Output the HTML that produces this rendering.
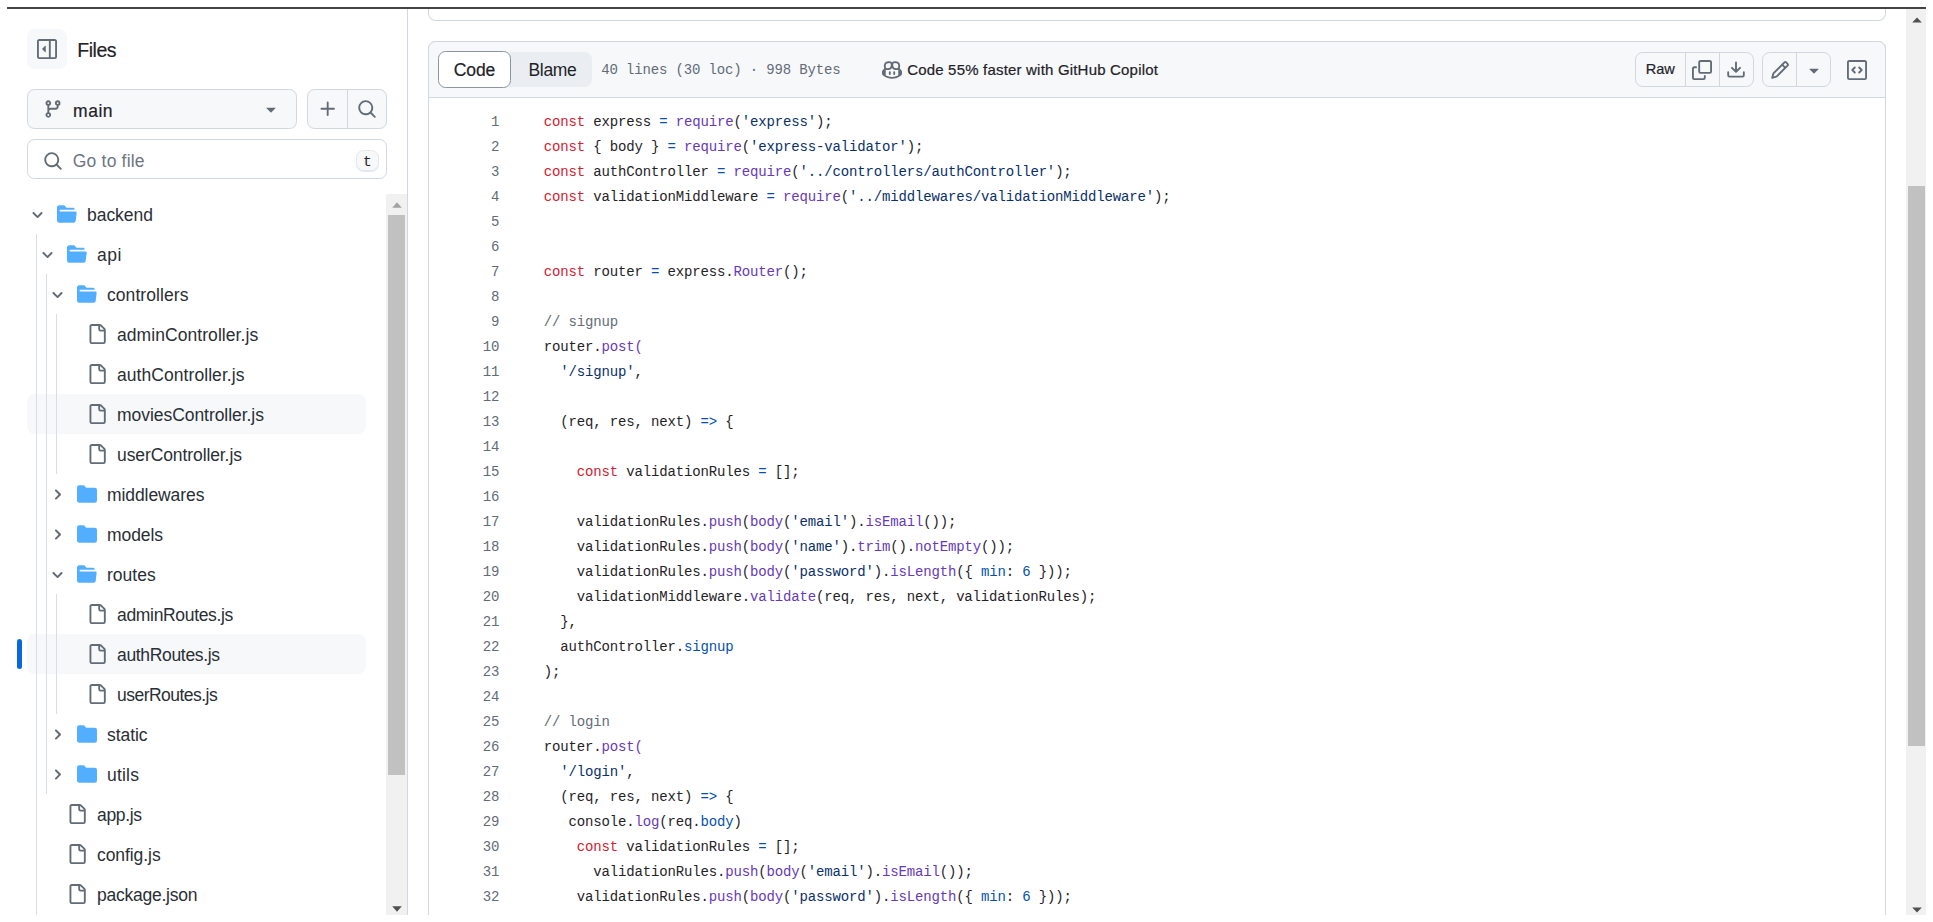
<!DOCTYPE html>
<html lang="en">
<head>
<meta charset="utf-8">
<title>authRoutes.js</title>
<style>
html,body{margin:0;padding:0;background:#fff;}
body{width:1933px;height:922px;position:relative;overflow:hidden;font-family:"Liberation Sans",sans-serif;color:#1f2328;}
.abs,.ic,.t{position:absolute;}
.ic{display:block;overflow:visible;}
.t{white-space:pre;line-height:1;}
.box{position:absolute;box-sizing:border-box;}
.tree{font-size:17.5px;color:#2a2f35;}
.sb{-webkit-text-stroke:0.2px #1f2328;}
.mono{font-family:"Liberation Mono",monospace;}
.ln{position:absolute;left:440px;width:59.3px;text-align:right;color:#636c76;}
.cl{position:absolute;left:543.75px;}
.code{font-family:"Liberation Mono",monospace;font-size:14px;letter-spacing:-0.154px;line-height:25px;white-space:pre;color:#1f2328;}
.k{color:#cf222e}.f{color:#6639ba}.c{color:#0550ae}.s{color:#0a3069}.m{color:#656d76}
</style>
</head>
<body>

<div class="box" style="left:7px;top:7px;width:1919px;height:2px;background:#444444"></div>
<div class="box" style="left:1906px;top:9px;width:20px;height:906px;background:#f1f1f1"></div>
<div class="box" style="left:1908px;top:186px;width:17px;height:560px;background:#c1c1c1"></div>
<svg class="ic" style="left:1911.5px;top:17.4px;width:10px;height:6px" viewBox="0 0 10 6"><path d="M5 0.5 9.8 5.5H0.2Z" fill="#505050"/></svg>
<svg class="ic" style="left:1911.5px;top:906.5px;width:10px;height:6px" viewBox="0 0 10 6"><path d="M5 5.5 9.8 0.5H0.2Z" fill="#505050"/></svg>
<div class="box" style="left:407px;top:9px;width:1px;height:906px;background:#d0d7de"></div>
<div class="box" style="left:27px;top:29px;width:40px;height:40px;background:#f6f8fa;border-radius:7.5px"></div>
<svg class="ic" style="left:37px;top:39px;width:20px;height:20px;fill:#636c76" viewBox="0 0 16 16"><path d="m4.177 7.823 2.396-2.396A.25.25 0 0 1 7 5.604v4.792a.25.25 0 0 1-.427.177L4.177 8.177a.25.25 0 0 1 0-.354Z"/><path d="M0 1.75C0 .784.784 0 1.750 0h12.500C15.216 0 16 .784 16 1.750v12.500A1.750 1.750 0 0 1 14.250 16H1.750A1.750 1.750 0 0 1 0 14.250Zm1.750-.250a.250.250 0 0 0-.250.250v12.500c0 .138.112.250.250.250H9.500v-13Zm12.500 13a.250.250 0 0 0 .250-.250V1.750a.250.250 0 0 0-.250-.250H11v13Z"/></svg>
<div class="t sb" id="files" style="left:77px;top:41.0px;font-size:19.5px;letter-spacing:-0.441px;margin-left:0.21px;">Files</div>
<div class="box" style="left:27px;top:89px;width:270px;height:40px;background:#f6f8fa;border:1px solid #d0d7de;border-radius:7.5px"></div>
<svg class="ic" style="left:43px;top:99px;width:20px;height:20px;fill:#636c76" viewBox="0 0 16 16"><path d="M9.500 3.250a2.250 2.250 0 1 1 3 2.122V6A2.500 2.500 0 0 1 10 8.500H6a1 1 0 0 0-1 1v1.128a2.251 2.251 0 1 1-1.500 0V5.372a2.250 2.250 0 1 1 1.500 0v1.836A2.493 2.493 0 0 1 6 7h4a1 1 0 0 0 1-1v-.628A2.250 2.250 0 0 1 9.500 3.250Zm-6 0a.750.750 0 1 0 1.500 0 .750.750 0 0 0-1.500 0Zm8.250-.750a.750.750 0 1 0 0 1.500.750.750 0 0 0 0-1.500ZM4.250 12a.750.750 0 1 0 0 1.500.750.750 0 0 0 0-1.500Z"/></svg>
<div class="t sb" id="main" style="left:73px;top:102.6px;font-size:17.5px;letter-spacing:0.504px;margin-left:0.08px;">main</div>
<svg class="ic" style="left:261px;top:99px;width:20px;height:20px;fill:#636c76" viewBox="0 0 16 16"><path d="m4.427 7.427 3.396 3.396a.250.250 0 0 0 .354 0l3.396-3.396A.250.250 0 0 0 11.396 7H4.604a.250.250 0 0 0-.177.427Z"/></svg>
<div class="box" style="left:307px;top:89px;width:80px;height:40px;background:#f6f8fa;border:1px solid #d0d7de;border-radius:7.5px"></div>
<div class="box" style="left:347px;top:90px;width:1px;height:38px;background:#d0d7de"></div>
<svg class="ic" style="left:318px;top:99px;width:20px;height:20px;fill:#636c76" viewBox="0 0 16 16"><path d="M7.750 2a.750.750 0 0 1 .750.750V7h4.250a.750.750 0 0 1 0 1.500H8.500v4.250a.750.750 0 0 1-1.500 0V8.500H2.750a.750.750 0 0 1 0-1.500H7V2.750A.750.750 0 0 1 7.750 2Z"/></svg>
<svg class="ic" style="left:357px;top:99px;width:20px;height:20px;fill:#636c76" viewBox="0 0 16 16"><path d="M10.680 11.740a6 6 0 0 1-7.922-8.982 6 6 0 0 1 8.982 7.922l3.040 3.040a.749.749 0 0 1-.326 1.275.749.749 0 0 1-.734-.215ZM11.500 7a4.499 4.499 0 1 0-8.997 0A4.499 4.499 0 0 0 11.500 7Z"/></svg>
<div class="box" style="left:27px;top:139px;width:360px;height:40px;background:#fff;border:1px solid #d0d7de;border-radius:7.5px"></div>
<svg class="ic" style="left:43px;top:151px;width:20px;height:20px;fill:#636c76" viewBox="0 0 16 16"><path d="M10.680 11.740a6 6 0 0 1-7.922-8.982 6 6 0 0 1 8.982 7.922l3.040 3.040a.749.749 0 0 1-.326 1.275.749.749 0 0 1-.734-.215ZM11.500 7a4.499 4.499 0 1 0-8.997 0A4.499 4.499 0 0 0 11.500 7Z"/></svg>
<div class="t" id="gotofile" style="left:73px;top:152.8px;font-size:17.5px;color:#6e7781;letter-spacing:0.183px;margin-left:-0.18px;">Go to file</div>
<div class="box" style="left:356px;top:150px;width:23px;height:22px;background:#f6f8fa;border:1px solid #e4e8ec;border-radius:7.5px;box-shadow:inset 0 -1px 0 #e4e8ec"></div>
<div class="t mono" style="left:363px;top:154.5px;font-size:14.5px;color:#1f2328">t</div>
<div class="box" style="left:386px;top:194px;width:21px;height:721px;background:#f1f1f1"></div>
<div class="box" style="left:388px;top:215px;width:17px;height:560px;background:#c1c1c1"></div>
<svg class="ic" style="left:391.6px;top:202.4px;width:10px;height:6px" viewBox="0 0 10 6"><path d="M5 0.3 9.8 5.8H0.2Z" fill="#a3a3a3"/></svg>
<svg class="ic" style="left:392px;top:906.4px;width:10px;height:6px" viewBox="0 0 10 6"><path d="M5 5.7 9.8 0.2H0.2Z" fill="#505050"/></svg>
<div class="tree">
<svg class="ic" style="left:30px;top:207px;width:15px;height:15px;fill:#636c76" viewBox="0 0 12 12"><path d="M6 8.825c-.2 0-.4-.1-.5-.2l-3.300-3.300c-.3-.3-.3-.8 0-1.100.3-.3.8-.3 1.100 0l2.700 2.700 2.700-2.700c.3-.3.8-.3 1.100 0 .3.3.3.8 0 1.100l-3.200 3.200c-.2.2-.4.3-.6.3Z"/></svg>
<svg class="ic" style="left:57px;top:204px;width:20px;height:20px;fill:#54aeff" viewBox="0 0 16 16"><path d="M.513 1.513A1.750 1.750 0 0 1 1.750 1h3.500c.550 0 1.070.260 1.400.700l.900 1.200a.250.250 0 0 0 .200.100H13a1 1 0 0 1 1 1v.500H2.750a.750.750 0 0 0 0 1.500h11.978a1 1 0 0 1 .994 1.117L15 13.250A1.750 1.750 0 0 1 13.250 15H1.750A1.750 1.750 0 0 1 0 13.250V2.750c0-.464.184-.910.513-1.237Z"/></svg>
<div class="t" id="r0" style="left:87px;top:206.8px;letter-spacing:-0.042px;margin-left:0.00px;">backend</div>
<svg class="ic" style="left:40px;top:247px;width:15px;height:15px;fill:#636c76" viewBox="0 0 12 12"><path d="M6 8.825c-.2 0-.4-.1-.5-.2l-3.300-3.300c-.3-.3-.3-.8 0-1.100.3-.3.8-.3 1.100 0l2.700 2.700 2.700-2.700c.3-.3.8-.3 1.100 0 .3.3.3.8 0 1.100l-3.200 3.200c-.2.2-.4.3-.6.3Z"/></svg>
<svg class="ic" style="left:67px;top:244px;width:20px;height:20px;fill:#54aeff" viewBox="0 0 16 16"><path d="M.513 1.513A1.750 1.750 0 0 1 1.750 1h3.500c.550 0 1.070.260 1.400.700l.900 1.200a.250.250 0 0 0 .200.100H13a1 1 0 0 1 1 1v.500H2.750a.750.750 0 0 0 0 1.500h11.978a1 1 0 0 1 .994 1.117L15 13.250A1.750 1.750 0 0 1 13.250 15H1.750A1.750 1.750 0 0 1 0 13.250V2.750c0-.464.184-.910.513-1.237Z"/></svg>
<div class="t" id="r1" style="left:97px;top:246.8px;letter-spacing:0.540px;margin-left:0.00px;">api</div>
<svg class="ic" style="left:50px;top:287px;width:15px;height:15px;fill:#636c76" viewBox="0 0 12 12"><path d="M6 8.825c-.2 0-.4-.1-.5-.2l-3.300-3.300c-.3-.3-.3-.8 0-1.100.3-.3.8-.3 1.100 0l2.700 2.700 2.700-2.700c.3-.3.8-.3 1.100 0 .3.3.3.8 0 1.100l-3.200 3.200c-.2.2-.4.3-.6.3Z"/></svg>
<svg class="ic" style="left:77px;top:284px;width:20px;height:20px;fill:#54aeff" viewBox="0 0 16 16"><path d="M.513 1.513A1.750 1.750 0 0 1 1.750 1h3.500c.550 0 1.070.260 1.400.700l.900 1.200a.250.250 0 0 0 .200.100H13a1 1 0 0 1 1 1v.500H2.750a.750.750 0 0 0 0 1.500h11.978a1 1 0 0 1 .994 1.117L15 13.250A1.750 1.750 0 0 1 13.250 15H1.750A1.750 1.750 0 0 1 0 13.250V2.750c0-.464.184-.910.513-1.237Z"/></svg>
<div class="t" id="r2" style="left:107px;top:286.8px;letter-spacing:0.071px;margin-left:0.00px;">controllers</div>
<svg class="ic" style="left:87px;top:324px;width:20px;height:20px;fill:#636c76" viewBox="0 0 16 16"><path d="M2 1.750C2 .784 2.784 0 3.750 0h6.586c.464 0 .909.184 1.237.513l2.914 2.914c.329.328.513.773.513 1.237v9.586A1.750 1.750 0 0 1 13.250 16h-9.500A1.750 1.750 0 0 1 2 14.250Zm1.750-.250a.250.250 0 0 0-.250.250v12.500c0 .138.112.250.250.250h9.500a.250.250 0 0 0 .250-.250V6h-2.750A1.750 1.750 0 0 1 9 4.250V1.500Zm6.750.062V4.250c0 .138.112.250.250.250h2.688l-.011-.013-2.914-2.914-.013-.011Z"/></svg>
<div class="t" id="r3" style="left:117px;top:326.8px;letter-spacing:0.064px;margin-left:0.00px;">adminController.js</div>
<svg class="ic" style="left:87px;top:364px;width:20px;height:20px;fill:#636c76" viewBox="0 0 16 16"><path d="M2 1.750C2 .784 2.784 0 3.750 0h6.586c.464 0 .909.184 1.237.513l2.914 2.914c.329.328.513.773.513 1.237v9.586A1.750 1.750 0 0 1 13.250 16h-9.500A1.750 1.750 0 0 1 2 14.250Zm1.750-.250a.250.250 0 0 0-.250.250v12.500c0 .138.112.250.250.250h9.500a.250.250 0 0 0 .250-.250V6h-2.750A1.750 1.750 0 0 1 9 4.250V1.500Zm6.750.062V4.250c0 .138.112.250.250.250h2.688l-.011-.013-2.914-2.914-.013-.011Z"/></svg>
<div class="t" id="r4" style="left:117px;top:366.8px;letter-spacing:0.062px;margin-left:0.00px;">authController.js</div>
<div class="box" style="left:27px;top:394px;width:339px;height:40px;background:#f6f8fa;border-radius:7.5px"></div>
<svg class="ic" style="left:87px;top:404px;width:20px;height:20px;fill:#636c76" viewBox="0 0 16 16"><path d="M2 1.750C2 .784 2.784 0 3.750 0h6.586c.464 0 .909.184 1.237.513l2.914 2.914c.329.328.513.773.513 1.237v9.586A1.750 1.750 0 0 1 13.250 16h-9.500A1.750 1.750 0 0 1 2 14.250Zm1.750-.250a.250.250 0 0 0-.250.250v12.500c0 .138.112.250.250.250h9.500a.250.250 0 0 0 .250-.250V6h-2.750A1.750 1.750 0 0 1 9 4.250V1.500Zm6.750.062V4.250c0 .138.112.250.250.250h2.688l-.011-.013-2.914-2.914-.013-.011Z"/></svg>
<div class="t" id="r5" style="left:117px;top:406.8px;letter-spacing:-0.050px;margin-left:0.00px;">moviesController.js</div>
<svg class="ic" style="left:87px;top:444px;width:20px;height:20px;fill:#636c76" viewBox="0 0 16 16"><path d="M2 1.750C2 .784 2.784 0 3.750 0h6.586c.464 0 .909.184 1.237.513l2.914 2.914c.329.328.513.773.513 1.237v9.586A1.750 1.750 0 0 1 13.250 16h-9.500A1.750 1.750 0 0 1 2 14.250Zm1.750-.250a.250.250 0 0 0-.250.250v12.500c0 .138.112.250.250.250h9.500a.250.250 0 0 0 .250-.250V6h-2.750A1.750 1.750 0 0 1 9 4.250V1.500Zm6.750.062V4.250c0 .138.112.250.250.250h2.688l-.011-.013-2.914-2.914-.013-.011Z"/></svg>
<div class="t" id="r6" style="left:117px;top:446.8px;letter-spacing:-0.094px;margin-left:0.00px;">userController.js</div>
<svg class="ic" style="left:50px;top:487px;width:15px;height:15px;fill:#636c76" viewBox="0 0 12 12"><path d="M4.700 10c-.2 0-.4-.1-.5-.2-.3-.3-.3-.8 0-1.100L6.900 6 4.200 3.300c-.3-.3-.3-.8 0-1.100.3-.3.8-.3 1.100 0l3.300 3.200c.3.3.3.8 0 1.100l-3.300 3.300c-.2.1-.4.2-.6.2Z"/></svg>
<svg class="ic" style="left:77px;top:484px;width:20px;height:20px;fill:#54aeff" viewBox="0 0 16 16"><path d="M1.750 1A1.750 1.750 0 0 0 0 2.750v10.500C0 14.216.784 15 1.750 15h12.500A1.750 1.750 0 0 0 16 13.250v-8.500A1.750 1.750 0 0 0 14.250 3H7.500a.250.250 0 0 1-.200-.100l-.900-1.200C6.070 1.260 5.550 1 5 1H1.750Z"/></svg>
<div class="t" id="r7" style="left:107px;top:486.8px;letter-spacing:-0.081px;margin-left:0.00px;">middlewares</div>
<svg class="ic" style="left:50px;top:527px;width:15px;height:15px;fill:#636c76" viewBox="0 0 12 12"><path d="M4.700 10c-.2 0-.4-.1-.5-.2-.3-.3-.3-.8 0-1.100L6.900 6 4.200 3.300c-.3-.3-.3-.8 0-1.100.3-.3.8-.3 1.100 0l3.300 3.200c.3.3.3.8 0 1.100l-3.300 3.300c-.2.1-.4.2-.6.2Z"/></svg>
<svg class="ic" style="left:77px;top:524px;width:20px;height:20px;fill:#54aeff" viewBox="0 0 16 16"><path d="M1.750 1A1.750 1.750 0 0 0 0 2.750v10.500C0 14.216.784 15 1.750 15h12.500A1.750 1.750 0 0 0 16 13.250v-8.500A1.750 1.750 0 0 0 14.250 3H7.500a.250.250 0 0 1-.200-.100l-.900-1.200C6.070 1.260 5.550 1 5 1H1.750Z"/></svg>
<div class="t" id="r8" style="left:107px;top:526.8px;letter-spacing:-0.059px;margin-left:0.00px;">models</div>
<svg class="ic" style="left:50px;top:567px;width:15px;height:15px;fill:#636c76" viewBox="0 0 12 12"><path d="M6 8.825c-.2 0-.4-.1-.5-.2l-3.300-3.300c-.3-.3-.3-.8 0-1.100.3-.3.8-.3 1.100 0l2.700 2.700 2.700-2.700c.3-.3.8-.3 1.100 0 .3.3.3.8 0 1.100l-3.200 3.200c-.2.2-.4.3-.6.3Z"/></svg>
<svg class="ic" style="left:77px;top:564px;width:20px;height:20px;fill:#54aeff" viewBox="0 0 16 16"><path d="M.513 1.513A1.750 1.750 0 0 1 1.750 1h3.500c.550 0 1.070.260 1.400.700l.900 1.200a.250.250 0 0 0 .200.100H13a1 1 0 0 1 1 1v.500H2.750a.750.750 0 0 0 0 1.500h11.978a1 1 0 0 1 .994 1.117L15 13.250A1.750 1.750 0 0 1 13.250 15H1.750A1.750 1.750 0 0 1 0 13.250V2.750c0-.464.184-.910.513-1.237Z"/></svg>
<div class="t" id="r9" style="left:107px;top:566.8px;letter-spacing:-0.002px;margin-left:0.00px;">routes</div>
<svg class="ic" style="left:87px;top:604px;width:20px;height:20px;fill:#636c76" viewBox="0 0 16 16"><path d="M2 1.750C2 .784 2.784 0 3.750 0h6.586c.464 0 .909.184 1.237.513l2.914 2.914c.329.328.513.773.513 1.237v9.586A1.750 1.750 0 0 1 13.250 16h-9.500A1.750 1.750 0 0 1 2 14.250Zm1.750-.250a.250.250 0 0 0-.250.250v12.500c0 .138.112.250.250.250h9.500a.250.250 0 0 0 .250-.250V6h-2.750A1.750 1.750 0 0 1 9 4.250V1.500Zm6.750.062V4.250c0 .138.112.250.250.250h2.688l-.011-.013-2.914-2.914-.013-.011Z"/></svg>
<div class="t" id="r10" style="left:117px;top:606.8px;letter-spacing:-0.326px;margin-left:0.00px;">adminRoutes.js</div>
<div class="box" style="left:27px;top:634px;width:339px;height:40px;background:#f6f8fa;border-radius:7.5px"></div>
<div class="box" style="left:17px;top:639px;width:5px;height:30px;background:#0969da;border-radius:7.5px"></div>
<svg class="ic" style="left:87px;top:644px;width:20px;height:20px;fill:#636c76" viewBox="0 0 16 16"><path d="M2 1.750C2 .784 2.784 0 3.750 0h6.586c.464 0 .909.184 1.237.513l2.914 2.914c.329.328.513.773.513 1.237v9.586A1.750 1.750 0 0 1 13.250 16h-9.500A1.750 1.750 0 0 1 2 14.250Zm1.750-.250a.250.250 0 0 0-.250.250v12.500c0 .138.112.250.250.250h9.500a.250.250 0 0 0 .250-.250V6h-2.750A1.750 1.750 0 0 1 9 4.250V1.500Zm6.750.062V4.250c0 .138.112.250.250.250h2.688l-.011-.013-2.914-2.914-.013-.011Z"/></svg>
<div class="t" id="r11" style="left:117px;top:646.8px;letter-spacing:-0.329px;margin-left:0.00px;">authRoutes.js</div>
<svg class="ic" style="left:87px;top:684px;width:20px;height:20px;fill:#636c76" viewBox="0 0 16 16"><path d="M2 1.750C2 .784 2.784 0 3.750 0h6.586c.464 0 .909.184 1.237.513l2.914 2.914c.329.328.513.773.513 1.237v9.586A1.750 1.750 0 0 1 13.250 16h-9.500A1.750 1.750 0 0 1 2 14.250Zm1.750-.250a.250.250 0 0 0-.250.250v12.500c0 .138.112.250.250.250h9.500a.250.250 0 0 0 .250-.250V6h-2.750A1.750 1.750 0 0 1 9 4.250V1.500Zm6.750.062V4.250c0 .138.112.250.250.250h2.688l-.011-.013-2.914-2.914-.013-.011Z"/></svg>
<div class="t" id="r12" style="left:117px;top:686.8px;letter-spacing:-0.527px;margin-left:0.00px;">userRoutes.js</div>
<svg class="ic" style="left:50px;top:727px;width:15px;height:15px;fill:#636c76" viewBox="0 0 12 12"><path d="M4.700 10c-.2 0-.4-.1-.5-.2-.3-.3-.3-.8 0-1.100L6.900 6 4.200 3.300c-.3-.3-.3-.8 0-1.100.3-.3.8-.3 1.100 0l3.300 3.200c.3.3.3.8 0 1.100l-3.300 3.300c-.2.1-.4.2-.6.2Z"/></svg>
<svg class="ic" style="left:77px;top:724px;width:20px;height:20px;fill:#54aeff" viewBox="0 0 16 16"><path d="M1.750 1A1.750 1.750 0 0 0 0 2.750v10.500C0 14.216.784 15 1.750 15h12.500A1.750 1.750 0 0 0 16 13.250v-8.500A1.750 1.750 0 0 0 14.250 3H7.500a.250.250 0 0 1-.200-.100l-.900-1.200C6.070 1.260 5.550 1 5 1H1.750Z"/></svg>
<div class="t" id="r13" style="left:107px;top:726.8px;letter-spacing:-0.061px;margin-left:0.00px;">static</div>
<svg class="ic" style="left:50px;top:767px;width:15px;height:15px;fill:#636c76" viewBox="0 0 12 12"><path d="M4.700 10c-.2 0-.4-.1-.5-.2-.3-.3-.3-.8 0-1.100L6.900 6 4.200 3.300c-.3-.3-.3-.8 0-1.100.3-.3.8-.3 1.100 0l3.300 3.200c.3.3.3.8 0 1.100l-3.300 3.300c-.2.1-.4.2-.6.2Z"/></svg>
<svg class="ic" style="left:77px;top:764px;width:20px;height:20px;fill:#54aeff" viewBox="0 0 16 16"><path d="M1.750 1A1.750 1.750 0 0 0 0 2.750v10.500C0 14.216.784 15 1.750 15h12.500A1.750 1.750 0 0 0 16 13.250v-8.500A1.750 1.750 0 0 0 14.250 3H7.500a.250.250 0 0 1-.200-.100l-.900-1.200C6.070 1.260 5.550 1 5 1H1.750Z"/></svg>
<div class="t" id="r14" style="left:107px;top:766.8px;letter-spacing:0.207px;margin-left:0.00px;">utils</div>
<svg class="ic" style="left:67px;top:804px;width:20px;height:20px;fill:#636c76" viewBox="0 0 16 16"><path d="M2 1.750C2 .784 2.784 0 3.750 0h6.586c.464 0 .909.184 1.237.513l2.914 2.914c.329.328.513.773.513 1.237v9.586A1.750 1.750 0 0 1 13.250 16h-9.500A1.750 1.750 0 0 1 2 14.250Zm1.750-.250a.250.250 0 0 0-.250.250v12.500c0 .138.112.250.250.250h9.500a.250.250 0 0 0 .250-.250V6h-2.750A1.750 1.750 0 0 1 9 4.250V1.500Zm6.750.062V4.250c0 .138.112.250.250.250h2.688l-.011-.013-2.914-2.914-.013-.011Z"/></svg>
<div class="t" id="r15" style="left:97px;top:806.8px;letter-spacing:-0.349px;margin-left:0.00px;">app.js</div>
<svg class="ic" style="left:67px;top:844px;width:20px;height:20px;fill:#636c76" viewBox="0 0 16 16"><path d="M2 1.750C2 .784 2.784 0 3.750 0h6.586c.464 0 .909.184 1.237.513l2.914 2.914c.329.328.513.773.513 1.237v9.586A1.750 1.750 0 0 1 13.250 16h-9.500A1.750 1.750 0 0 1 2 14.250Zm1.750-.250a.250.250 0 0 0-.250.250v12.500c0 .138.112.250.250.250h9.500a.250.250 0 0 0 .250-.250V6h-2.750A1.750 1.750 0 0 1 9 4.250V1.500Zm6.750.062V4.250c0 .138.112.250.250.250h2.688l-.011-.013-2.914-2.914-.013-.011Z"/></svg>
<div class="t" id="r16" style="left:97px;top:846.8px;letter-spacing:-0.070px;margin-left:0.00px;">config.js</div>
<svg class="ic" style="left:67px;top:884px;width:20px;height:20px;fill:#636c76" viewBox="0 0 16 16"><path d="M2 1.750C2 .784 2.784 0 3.750 0h6.586c.464 0 .909.184 1.237.513l2.914 2.914c.329.328.513.773.513 1.237v9.586A1.750 1.750 0 0 1 13.250 16h-9.500A1.750 1.750 0 0 1 2 14.250Zm1.750-.250a.250.250 0 0 0-.250.250v12.500c0 .138.112.250.250.250h9.500a.250.250 0 0 0 .250-.250V6h-2.750A1.750 1.750 0 0 1 9 4.250V1.500Zm6.750.062V4.250c0 .138.112.250.250.250h2.688l-.011-.013-2.914-2.914-.013-.011Z"/></svg>
<div class="t" id="r17" style="left:97px;top:886.8px;letter-spacing:-0.243px;margin-left:0.00px;">package.json</div>
</div>
<div class="box" style="left:36px;top:234px;width:1px;height:681px;background:#d8dee4"></div>
<div class="box" style="left:46px;top:274px;width:1px;height:520px;background:#d8dee4"></div>
<div class="box" style="left:56px;top:314px;width:1px;height:160px;background:#d8dee4"></div>
<div class="box" style="left:56px;top:594px;width:1px;height:120px;background:#d8dee4"></div>
<div class="box" style="left:428px;top:9px;width:1458px;height:12px;border:1px solid #d0d7de;border-top:0;border-radius:0 0 7.5px 7.5px;background:#fff"></div>
<div class="box" style="left:428px;top:41px;width:1458px;height:900px;border:1px solid #d0d7de;border-radius:7.5px 7.5px 0 0;background:#fff"></div>
<div class="box" style="left:428px;top:41px;width:1458px;height:57px;border:1px solid #d0d7de;border-radius:7.5px 7.5px 0 0;background:#f6f8fa"></div>
<div class="box" style="left:438px;top:52px;width:154px;height:35px;background:#eaeef2;border-radius:7.5px"></div>
<div class="box" style="left:438px;top:51px;width:73px;height:37px;background:#fff;border:1px solid #8c959f;border-radius:7.5px"></div>
<div class="t sb" id="tcode" style="left:453px;top:61.5px;font-size:17.5px;letter-spacing:-0.146px;margin-left:0.85px;">Code</div>
<div class="t" id="tblame" style="left:528.5px;top:61.5px;font-size:17.5px;letter-spacing:-0.325px;margin-left:-0.03px;">Blame</div>
<div class="t mono" id="tinfo" style="left:601.3px;top:63.1px;font-size:14px;letter-spacing:-0.154px;color:#636c76">40 lines (30 loc) · 998 Bytes</div>
<svg class="ic" style="left:882px;top:60px;width:20px;height:20px;fill:#636c76" viewBox="0 0 16 16"><path d="M7.998 15.035c-4.562 0-7.873-2.914-7.998-3.749V9.338c.085-.628.677-1.686 1.588-2.065.013-.07.024-.143.036-.218.029-.183.060-.384.126-.612-.201-.508-.254-1.084-.254-1.656 0-.870.128-1.769.693-2.484.579-.733 1.494-1.124 2.724-1.261 1.206-.134 2.262.034 2.944.765.050.053.096.108.139.165.044-.057.094-.112.143-.165.682-.731 1.738-.899 2.944-.765 1.230.137 2.145.528 2.724 1.261.566.715.693 1.614.693 2.484 0 .572-.053 1.148-.254 1.656.066.228.098.429.126.612.012.076.024.148.037.218.924.385 1.522 1.471 1.591 2.095v1.872c0 .766-3.351 3.795-8.002 3.795Zm0-1.485c2.280 0 4.584-1.110 5.002-1.433V7.862l-.023-.116c-.490.210-1.075.291-1.727.291-1.146 0-2.059-.327-2.710-.991A3.222 3.222 0 0 1 8 6.303a3.240 3.240 0 0 1-.544.743c-.650.664-1.563.991-2.710.991-.652 0-1.236-.081-1.727-.291l-.023.116v4.255c.419.323 2.722 1.433 5.002 1.433ZM6.762 2.830c-.193-.206-.637-.413-1.682-.297-1.019.113-1.479.404-1.713.700-.247.312-.369.789-.369 1.554 0 .793.129 1.171.308 1.371.162.181.519.379 1.442.379.853 0 1.339-.235 1.638-.540.315-.322.527-.827.617-1.553.117-.935-.037-1.395-.241-1.614Zm4.155-.297c-1.044-.116-1.488.091-1.681.297-.204.219-.359.679-.242 1.614.091.726.303 1.231.618 1.553.299.305.784.540 1.638.540.922 0 1.280-.198 1.442-.379.179-.200.308-.578.308-1.371 0-.765-.123-1.242-.370-1.554-.233-.296-.693-.587-1.713-.700Z"/><path d="M6.250 9.037a.750.750 0 0 1 .750.750v1.501a.750.750 0 0 1-1.500 0V9.787a.750.750 0 0 1 .750-.750Zm4.250.750v1.501a.750.750 0 0 1-1.500 0V9.787a.750.750 0 0 1 1.500 0Z"/></svg>
<div class="t sb" id="tcop" style="left:906.5px;top:62px;font-size:15px;letter-spacing:0.191px;margin-left:0.63px;">Code 55% faster with GitHub Copilot</div>
<div class="box" style="left:1635px;top:52px;width:119px;height:35px;background:#f6f8fa;border:1px solid #d0d7de;border-radius:7.5px"></div>
<div class="box" style="left:1685px;top:53px;width:1px;height:33px;background:#d0d7de"></div>
<div class="box" style="left:1719px;top:53px;width:1px;height:33px;background:#d0d7de"></div>
<div class="t sb" id="traw" style="left:1646px;top:62px;font-size:14.6px;letter-spacing:-0.146px;margin-left:-0.15px;">Raw</div>
<svg class="ic" style="left:1692px;top:60px;width:20px;height:20px;fill:#636c76" viewBox="0 0 16 16"><path d="M0 6.750C0 5.784.784 5 1.750 5h1.500a.750.750 0 0 1 0 1.500h-1.500a.250.250 0 0 0-.250.250v7.500c0 .138.112.250.250.250h7.500a.250.250 0 0 0 .250-.250v-1.500a.750.750 0 0 1 1.500 0v1.500A1.750 1.750 0 0 1 9.250 16h-7.500A1.750 1.750 0 0 1 0 14.250Z"/><path d="M5 1.750C5 .784 5.784 0 6.750 0h7.500C15.216 0 16 .784 16 1.750v7.500A1.750 1.750 0 0 1 14.250 11h-7.500A1.750 1.750 0 0 1 5 9.250Zm1.750-.250a.250.250 0 0 0-.250.250v7.500c0 .138.112.250.250.250h7.500a.250.250 0 0 0 .250-.250v-7.500a.250.250 0 0 0-.250-.250Z"/></svg>
<svg class="ic" style="left:1725.5px;top:60px;width:20px;height:20px;fill:#636c76" viewBox="0 0 16 16"><path d="M2.750 14A1.750 1.750 0 0 1 1 12.250v-2.500a.750.750 0 0 1 1.500 0v2.500c0 .138.112.250.250.250h10.500a.250.250 0 0 0 .250-.250v-2.500a.750.750 0 0 1 1.500 0v2.500A1.750 1.750 0 0 1 13.250 14Z"/><path d="M7.250 7.689V2a.750.750 0 0 1 1.500 0v5.689l1.970-1.969a.749.749 0 1 1 1.060 1.060l-3.250 3.250a.749.749 0 0 1-1.060 0L4.220 6.780a.749.749 0 1 1 1.060-1.060l1.970 1.969Z"/></svg>
<div class="box" style="left:1762px;top:52px;width:69px;height:35px;background:#f6f8fa;border:1px solid #d0d7de;border-radius:7.5px"></div>
<div class="box" style="left:1796px;top:53px;width:1px;height:33px;background:#d0d7de"></div>
<svg class="ic" style="left:1770px;top:60px;width:20px;height:20px;fill:#636c76" viewBox="0 0 16 16"><path d="M11.013 1.427a1.750 1.750 0 0 1 2.474 0l1.086 1.086a1.750 1.750 0 0 1 0 2.474l-8.610 8.610c-.210.210-.470.364-.756.445l-3.251.930a.750.750 0 0 1-.927-.928l.929-3.250c.081-.286.235-.547.445-.758l8.610-8.610Zm.176 4.823L9.750 4.810l-6.286 6.287a.253.253 0 0 0-.064.108l-.558 1.953 1.953-.558a.253.253 0 0 0 .108-.064Zm1.238-3.763a.250.250 0 0 0-.354 0L10.811 3.750l1.439 1.440 1.263-1.263a.250.250 0 0 0 0-.354Z"/></svg>
<svg class="ic" style="left:1804px;top:60px;width:20px;height:20px;fill:#636c76" viewBox="0 0 16 16"><path d="m4.427 7.427 3.396 3.396a.250.250 0 0 0 .354 0l3.396-3.396A.250.250 0 0 0 11.396 7H4.604a.250.250 0 0 0-.177.427Z"/></svg>
<svg class="ic" style="left:1847px;top:60px;width:20px;height:20px;fill:#636c76" viewBox="0 0 16 16"><path d="M0 1.750C0 .784.784 0 1.750 0h12.500C15.216 0 16 .784 16 1.750v12.500A1.750 1.750 0 0 1 14.250 16H1.750A1.750 1.750 0 0 1 0 14.250Zm1.750-.250a.250.250 0 0 0-.250.250v12.500c0 .138.112.250.250.250h12.500a.250.250 0 0 0 .250-.250V1.750a.250.250 0 0 0-.250-.250Zm7.470 3.970a.750.750 0 0 1 1.060 0l2 2a.750.750 0 0 1 0 1.060l-2 2a.749.749 0 0 1-1.275-.326.749.749 0 0 1 .215-.734L10.690 8 9.220 6.530a.750.750 0 0 1 0-1.060ZM6.780 6.530 5.310 8l1.470 1.470a.749.749 0 0 1-.326 1.275.749.749 0 0 1-.734-.215l-2-2a.750.750 0 0 1 0-1.060l2-2a.751.751 0 0 1 1.042.018.751.751 0 0 1 .018 1.042Z"/></svg>
<div class="code">
<div class="ln" style="top:109.6px">1</div><div class="cl" style="top:109.6px"><span class="k">const</span> express <span class="c">=</span> <span class="f">require</span>(<span class="s">'express'</span>);</div>
<div class="ln" style="top:134.6px">2</div><div class="cl" style="top:134.6px"><span class="k">const</span> { body } <span class="c">=</span> <span class="f">require</span>(<span class="s">'express-validator'</span>);</div>
<div class="ln" style="top:159.6px">3</div><div class="cl" style="top:159.6px"><span class="k">const</span> authController <span class="c">=</span> <span class="f">require</span>(<span class="s">'../controllers/authController'</span>);</div>
<div class="ln" style="top:184.6px">4</div><div class="cl" style="top:184.6px"><span class="k">const</span> validationMiddleware <span class="c">=</span> <span class="f">require</span>(<span class="s">'../middlewares/validationMiddleware'</span>);</div>
<div class="ln" style="top:209.6px">5</div><div class="cl" style="top:209.6px"></div>
<div class="ln" style="top:234.6px">6</div><div class="cl" style="top:234.6px"></div>
<div class="ln" style="top:259.6px">7</div><div class="cl" style="top:259.6px"><span class="k">const</span> router <span class="c">=</span> express.<span class="f">Router</span>();</div>
<div class="ln" style="top:284.6px">8</div><div class="cl" style="top:284.6px"></div>
<div class="ln" style="top:309.6px">9</div><div class="cl" style="top:309.6px"><span class="m">// signup</span></div>
<div class="ln" style="top:334.6px">10</div><div class="cl" style="top:334.6px">router.<span class="f">post(</span></div>
<div class="ln" style="top:359.6px">11</div><div class="cl" style="top:359.6px">  <span class="s">'/signup'</span>,</div>
<div class="ln" style="top:384.6px">12</div><div class="cl" style="top:384.6px"></div>
<div class="ln" style="top:409.6px">13</div><div class="cl" style="top:409.6px">  (req, res, next) <span class="c">=&gt;</span> {</div>
<div class="ln" style="top:434.6px">14</div><div class="cl" style="top:434.6px"></div>
<div class="ln" style="top:459.6px">15</div><div class="cl" style="top:459.6px">    <span class="k">const</span> validationRules <span class="c">=</span> [];</div>
<div class="ln" style="top:484.6px">16</div><div class="cl" style="top:484.6px"></div>
<div class="ln" style="top:509.6px">17</div><div class="cl" style="top:509.6px">    validationRules.<span class="f">push</span>(<span class="f">body</span>(<span class="s">'email'</span>).<span class="f">isEmail</span>());</div>
<div class="ln" style="top:534.6px">18</div><div class="cl" style="top:534.6px">    validationRules.<span class="f">push</span>(<span class="f">body</span>(<span class="s">'name'</span>).<span class="f">trim</span>().<span class="f">notEmpty</span>());</div>
<div class="ln" style="top:559.6px">19</div><div class="cl" style="top:559.6px">    validationRules.<span class="f">push</span>(<span class="f">body</span>(<span class="s">'password'</span>).<span class="f">isLength</span>({ <span class="c">min</span>: <span class="c">6</span> }));</div>
<div class="ln" style="top:584.6px">20</div><div class="cl" style="top:584.6px">    validationMiddleware.<span class="f">validate</span>(req, res, next, validationRules);</div>
<div class="ln" style="top:609.6px">21</div><div class="cl" style="top:609.6px">  },</div>
<div class="ln" style="top:634.6px">22</div><div class="cl" style="top:634.6px">  authController.<span class="c">signup</span></div>
<div class="ln" style="top:659.6px">23</div><div class="cl" style="top:659.6px">);</div>
<div class="ln" style="top:684.6px">24</div><div class="cl" style="top:684.6px"></div>
<div class="ln" style="top:709.6px">25</div><div class="cl" style="top:709.6px"><span class="m">// login</span></div>
<div class="ln" style="top:734.6px">26</div><div class="cl" style="top:734.6px">router.<span class="f">post(</span></div>
<div class="ln" style="top:759.6px">27</div><div class="cl" style="top:759.6px">  <span class="s">'/login'</span>,</div>
<div class="ln" style="top:784.6px">28</div><div class="cl" style="top:784.6px">  (req, res, next) <span class="c">=&gt;</span> {</div>
<div class="ln" style="top:809.6px">29</div><div class="cl" style="top:809.6px">   console.<span class="f">log</span>(req.<span class="c">body</span>)</div>
<div class="ln" style="top:834.6px">30</div><div class="cl" style="top:834.6px">    <span class="k">const</span> validationRules <span class="c">=</span> [];</div>
<div class="ln" style="top:859.6px">31</div><div class="cl" style="top:859.6px">      validationRules.<span class="f">push</span>(<span class="f">body</span>(<span class="s">'email'</span>).<span class="f">isEmail</span>());</div>
<div class="ln" style="top:884.6px">32</div><div class="cl" style="top:884.6px">    validationRules.<span class="f">push</span>(<span class="f">body</span>(<span class="s">'password'</span>).<span class="f">isLength</span>({ <span class="c">min</span>: <span class="c">6</span> }));</div>
</div>
<div class="box" style="left:0;top:915px;width:1933px;height:7px;background:#fff"></div>
<div class="box" style="left:1926px;top:0;width:7px;height:922px;background:#fff"></div>
</body>
</html>
